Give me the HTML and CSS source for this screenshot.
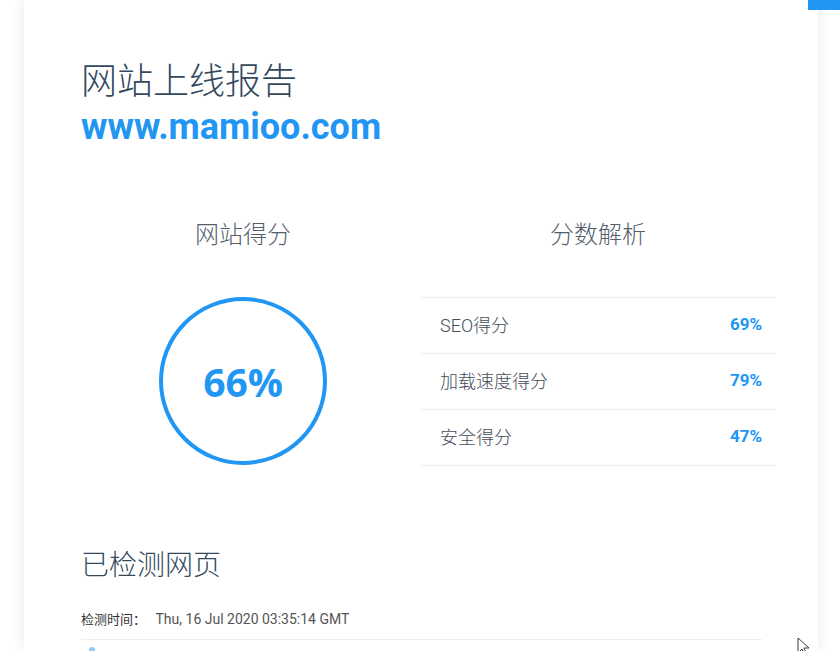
FILE: index.html
```html
<!DOCTYPE html>
<html lang="zh-CN">
<head>
  <meta charset="UTF-8">
  <meta name="viewport" content="width=device-width, initial-scale=1.0">
  <title>网站上线报告</title>
  <link rel="stylesheet" href="styles.css">
</head>
<body>
  <div class="top-btn"></div>
  <div class="container">
    <h1 class="title">网站上线报告</h1>
    <div class="domain">www.mamioo.com</div>

    <div class="score-row">
      <div class="score-col">
        <h2 class="col-title">网站得分</h2>
        <div class="circle"><span>66%</span></div>
      </div>
      <div class="detail-col">
        <h2 class="col-title">分数解析</h2>
        <table class="score-table">
          <tr><td>SEO得分</td><td class="val">69%</td></tr>
          <tr><td>加载速度得分</td><td class="val">79%</td></tr>
          <tr><td>安全得分</td><td class="val">47%</td></tr>
        </table>
      </div>
    </div>

    <h2 class="section-title">已检测网页</h2>
    <div class="check-time">
      <span class="label">检测时间：</span>
      <span class="time">Thu, 16 Jul 2020 03:35:14 GMT</span>
    </div>
    <div class="page-list">
      <div class="page-item"><span class="dot"></span></div>
    </div>
  </div>

  <svg class="cursor" width="14" height="20" viewBox="0 0 14 20">
    <path d="M1 1 L1 16 L5 12 L8 19 L10 18 L7 11 L12 11 Z" fill="#fff" stroke="#2c3e50" stroke-width="1"/>
  </svg>
</body>
</html>
```

FILE: styles.css
```css
body {
  margin: 0;
  background-color: #fff;
  font-family: Roboto, "Noto Sans CJK SC", sans-serif;
  height: 651px;
  overflow: hidden;
}
.top-btn {
  position: fixed;
  top: 0;
  right: 0;
  width: 32px;
  height: 10px;
  background-color: #2196f3;
  z-index: 10;
}
.container {
  margin: 0 22px 0 24px;
  padding: 58px 42px 0 57px;
  height: 651px;
  box-sizing: border-box;
  background-color: #fff;
  box-shadow: 0 0 14px rgba(0, 0, 0, 0.09);
}
.title {
  margin: 0;
  font-size: 36px;
  font-weight: 300;
  line-height: 48px;
  color: #34495e;
}
.domain {
  font-family: Roboto, sans-serif;
  font-size: 36px;
  font-weight: 700;
  line-height: 42px;
  color: #2196f3;
}
.score-row {
  display: grid;
  grid-template-columns: 324px 356px;
  justify-content: space-between;
  margin-top: 71px;
}
.col-title {
  margin: 0;
  text-align: center;
  font-size: 24px;
  font-weight: 300;
  line-height: 32px;
  color: #555e6b;
}
.score-col {
  display: flex;
  flex-direction: column;
  align-items: center;
}
.circle {
  margin-top: 46px;
  width: 160px;
  height: 160px;
  border: 4px solid #2196f3;
  border-radius: 50%;
  display: flex;
  align-items: center;
  justify-content: center;
}
.circle span {
  font-family: "Open Sans", sans-serif;
  font-size: 39px;
  font-weight: 700;
  color: #2196f3;
}
.score-table {
  margin-top: 46px;
  width: 100%;
  border-collapse: collapse;
  border-top: 1px solid #eee;
}
.score-table td {
  height: 52px;
  padding: 0 20px 3px;
  border-bottom: 1px solid #eee;
  font-size: 18px;
  font-weight: 300;
  color: #444c58;
}
.score-table td.val {
  text-align: right;
  padding-right: 14px;
  font-size: 17px;
  font-weight: 700;
  color: #2196f3;
}
.section-title {
  margin: 80px 0 0;
  font-size: 28px;
  font-weight: 300;
  line-height: 40px;
  color: #34495e;
}
.check-time {
  margin-top: 20px;
  font-size: 14px;
  line-height: 26px;
  color: #555;
}
.check-time .label {
  font-size: 13px;
  color: #333;
  margin-right: 6px;
}
.page-list {
  margin-right: 14px;
  border-top: 1px solid #eee;
  margin-top: 6px;
}
.page-item {
  padding: 7px 8px;
}
.dot {
  display: block;
  width: 6px;
  height: 6px;
  border-radius: 50%;
  background-color: #90caf9;
}
.cursor {
  position: fixed;
  left: 797px;
  top: 637px;
}
```
